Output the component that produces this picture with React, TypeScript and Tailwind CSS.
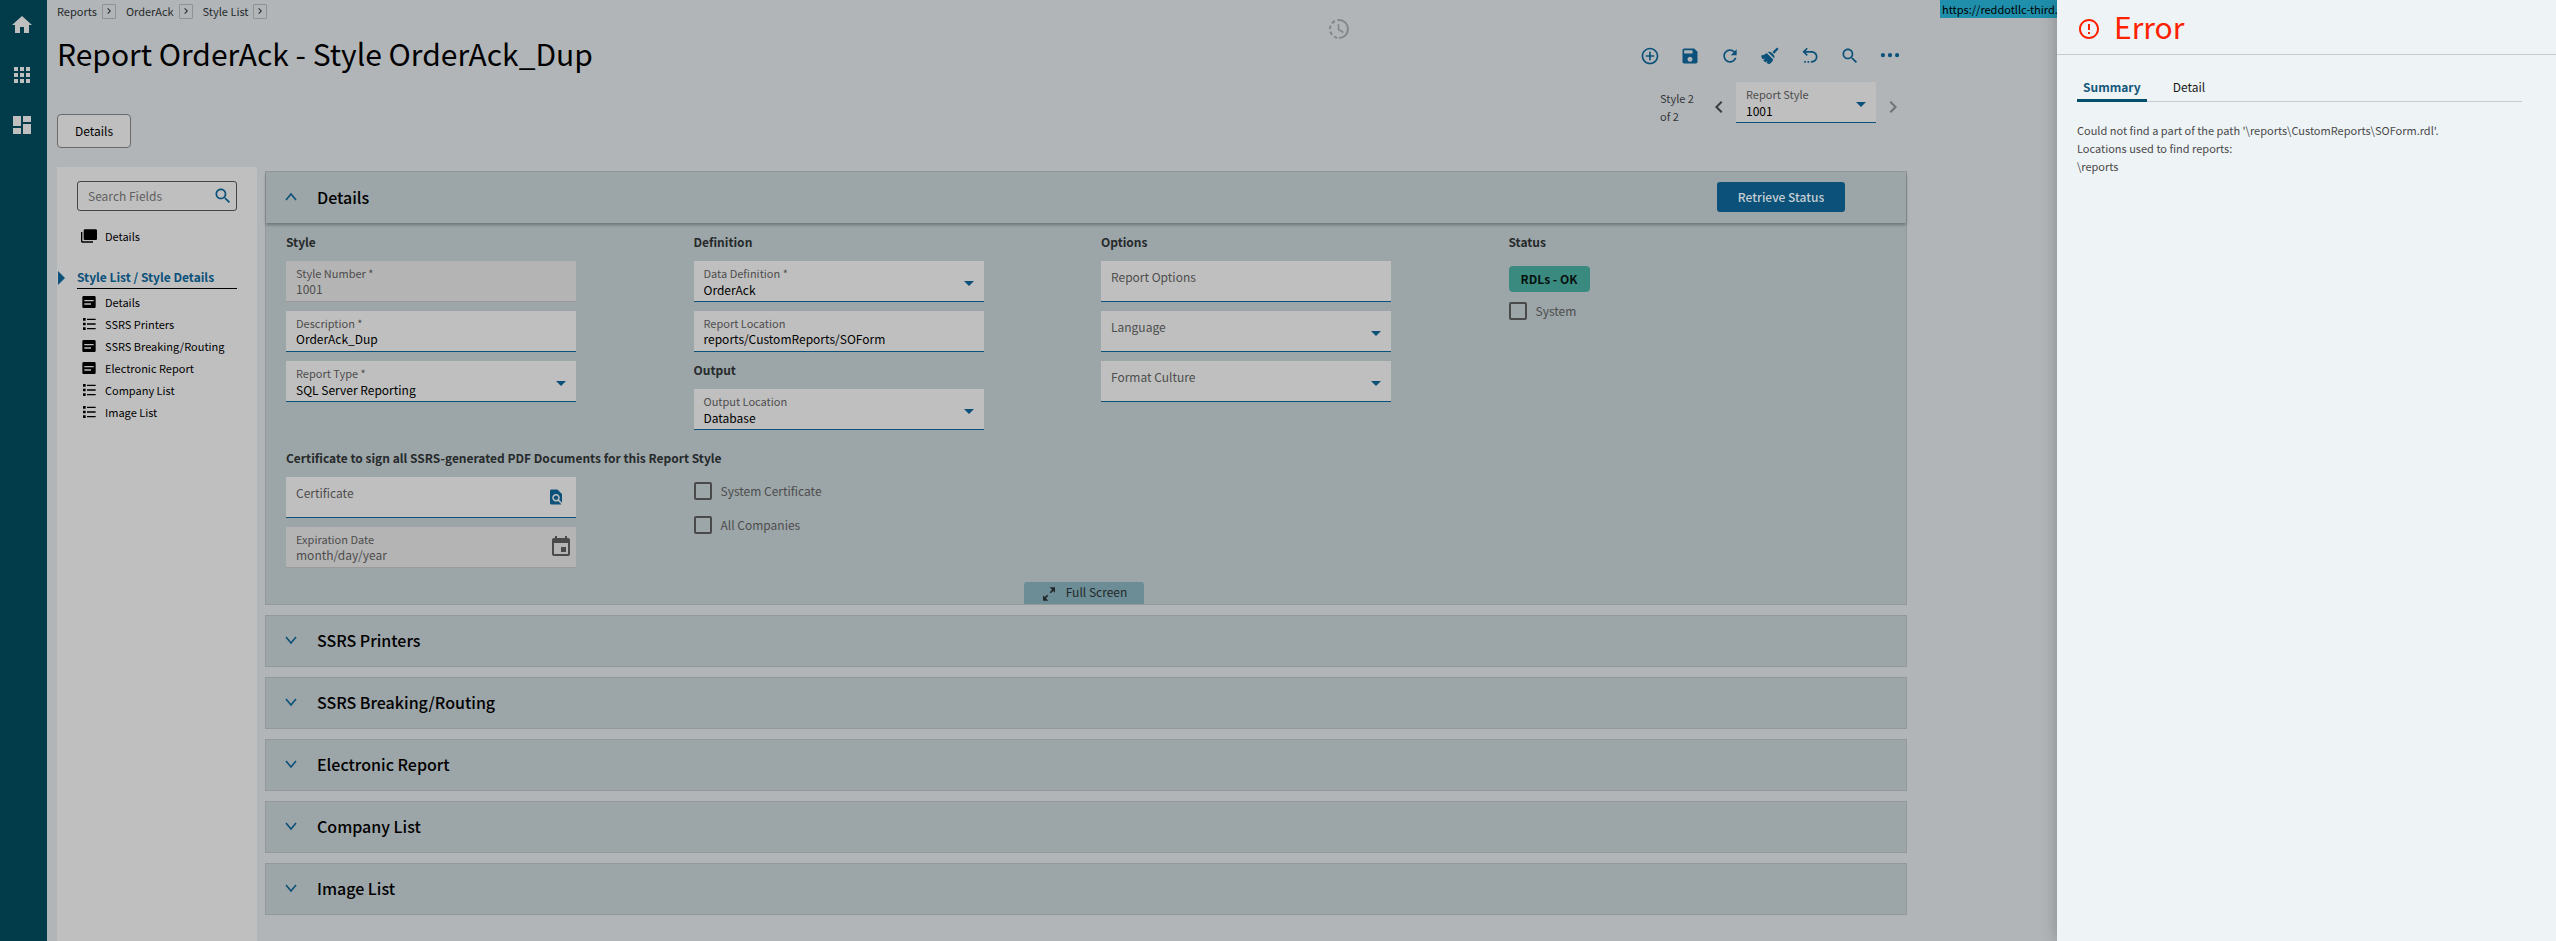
import React from 'react';

interface FieldProps {
  id: string;
  label: string;
  value?: string;
  disabled?: boolean;
}

interface SelectFieldProps extends FieldProps {
  compact?: boolean;
}

const menuItems = [
  { title: 'Details', kind: 'card' },
  { title: 'SSRS Printers', kind: 'list' },
  { title: 'SSRS Breaking/Routing', kind: 'card' },
  { title: 'Electronic Report', kind: 'card' },
  { title: 'Company List', kind: 'list' },
  { title: 'Image List', kind: 'list' },
];

const collapsedCards = ['SSRS Printers', 'SSRS Breaking/Routing', 'Electronic Report', 'Company List', 'Image List'];

const breadcrumbs = ['Reports', 'OrderAck', 'Style List'];

// Material icon paths
const paths = {
  home: 'M10 20v-6h4v6h5v-8h3L12 3 2 12h3v8z',
  apps: 'M4 8h4V4H4v4zm6 12h4v-4h-4v4zm-6 0h4v-4H4v4zm0-6h4v-4H4v4zm6 0h4v-4h-4v4zm6-10v4h4V4h-4zm-6 4h4V4h-4v4zm6 6h4v-4h-4v4zm0 6h4v-4h-4v4z',
  dashboard: 'M3 13h8V3H3v10zm0 8h8v-6H3v6zm10 0h8V11h-8v10zm0-18v6h8V3h-8z',
  add: 'M13 7h-2v4H7v2h4v4h2v-4h4v-2h-4V7zm-1-5C6.48 2 2 6.48 2 12s4.48 10 10 10 10-4.48 10-10S17.52 2 12 2zm0 18c-4.41 0-8-3.59-8-8s3.59-8 8-8 8 3.59 8 8-3.59 8-8 8z',
  save: 'M17 3H5c-1.11 0-2 .9-2 2v14c0 1.1.89 2 2 2h14c1.1 0 2-.9 2-2V7l-4-4zm-5 16c-1.66 0-3-1.34-3-3s1.34-3 3-3 3 1.34 3 3-1.34 3-3 3zm3-10H5V5h10v4z',
  refresh: 'M17.65 6.35C16.2 4.9 14.21 4 12 4c-4.42 0-7.99 3.58-7.99 8s3.57 8 7.99 8c3.73 0 6.84-2.55 7.73-6h-2.08c-.82 2.33-3.04 4-5.65 4-3.31 0-6-2.69-6-6s2.69-6 6-6c1.66 0 3.14.69 4.22 1.78L13 11h7V4l-2.35 2.35z',
  broom: 'M20.600 1.800l1.700 1.700-5.300 5.700-2.100-2.100zM13.900 8l2.300 2.300c1.200 1.500 1.400 2.900.9 4.500L9.400 7.100C11 6.500 12.600 6.900 13.900 8zM8 8.300l7.900 7.900c-1 2.400-2.600 4.300-4.800 5.700l-3.300-1.500 1.300-2-2.800 1.100-2.400-2.100 2.300-2.300-3.500.9L1.300 11.500C3.800 11.200 6.100 10.200 8 8.300z',
  undo: 'M8 2l1.400 1.400L6.800 6H14c3.900 0 7 3.100 7 7s-3.100 7-7 7h-1v-2h1c2.800 0 5-2.200 5-5s-2.200-5-5-5H6.800l2.600 2.600L8 12 3 7zM5 18h2v2H5zM9 18h2v2H9z',
  search: 'M15.5 14h-.79l-.28-.27C15.41 12.59 16 11.11 16 9.5 16 5.91 13.09 3 9.5 3S3 5.91 3 9.5 5.91 16 9.5 16c1.61 0 3.09-.59 4.23-1.57l.27.28v.79l5 4.99L20.49 19l-4.99-5zm-6 0C7.01 14 5 11.99 5 9.5S7.01 5 9.5 5 14 7.01 14 9.5 11.99 14 9.500 14z',
  more: 'M3.500 8.500a2.500 2.500 0 1 0 0 5 2.500 2.500 0 0 0 0-5zM12 8.500a2.500 2.500 0 1 0 0 5 2.500 2.500 0 0 0 0-5zM20.500 8.500a2.500 2.500 0 1 0 0 5 2.500 2.500 0 0 0 0-5z',
  left: 'M15.41 7.41L14 6l-6 6 6 6 1.41-1.41L10.83 12z',
  right: 'M10 6L8.59 7.41 13.17 12l-4.58 4.59L10 18l6-6z',
  findInPage: 'M20 19.59V8l-6-6H6c-1.1 0-1.99.9-1.99 2L4 20c0 1.1.89 2 1.99 2H18c.45 0 .85-.15 1.19-.4l-4.43-4.43c-.8.52-1.74.83-2.76.83-2.76 0-5-2.24-5-5s2.24-5 5-5 5 2.24 5 5c0 1.02-.31 1.96-.83 2.75L20 19.59zM9 13c0 1.66 1.34 3 3 3s3-1.34 3-3-1.34-3-3-3-3 1.34-3 3z',
  event: 'M17 12h-5v5h5v-5zM16 1v2H8V1H6v2H5c-1.11 0-1.99.9-1.99 2L3 19c0 1.1.89 2 2 2h14c1.1 0 2-.9 2-2V5c0-1.1-.9-2-2-2h-1V1h-2zm3 18H5V8h14v11z',
  error: 'M11 15h2v2h-2v-2zm0-8h2v6h-2V7zm.99-5C6.47 2 2 6.48 2 12s4.47 10 9.99 10C17.52 22 22 17.52 22 12S17.52 2 11.99 2zM12 20c-4.42 0-8-3.58-8-8s3.58-8 8-8 8 3.58 8 8-3.58 8-8 8z',
  collections: 'M2 6H0v14c0 1.100.9 2 2 2h16v-2H2V6zM22 2H6c-1.100 0-2 .9-2 2v12c0 1.100.9 2 2 2h16c1.100 0 2-.9 2-2V4c0-1.100-.9-2-2-2z',
  card: 'M20 3H4c-1.100 0-2 .9-2 2v14c0 1.100.9 2 2 2h16c1.100 0 2-.9 2-2V5c0-1.100-.9-2-2-2zM5 9h14v2H5zM5 14h10v2H5z',
  list: 'M3 3h4v4H3zM3 10h4v4H3zM3 17h4v4H3zM9 4h13v2H9zM9 11h13v2H9zM9 18h13v2H9z',
  fullscreen: 'M13 2h8v8l-2.600-2.600-3.600 3.600-1.800-1.800 3.600-3.600zM3 14l2.600 2.600 3.600-3.600 1.800 1.800-3.600 3.600L11 22H3z',
};

const toolbar: { name: keyof typeof paths; label: string }[] = [
  { name: 'add', label: 'New' },
  { name: 'save', label: 'Save' },
  { name: 'refresh', label: 'Refresh' },
  { name: 'broom', label: 'Clear' },
  { name: 'undo', label: 'Undo' },
  { name: 'search', label: 'Search' },
  { name: 'more', label: 'Overflow' },
];

const Icon: React.FC<{ name: keyof typeof paths; className?: string }> = ({ name, className = 'size-6' }) => (
  <svg viewBox="0 0 24 24" fill="currentColor" fillRule="evenodd" className={`shrink-0 ${className}`} aria-hidden="true">
    <path d={paths[name]} />
  </svg>
);

const Chevron: React.FC<{ up?: boolean }> = ({ up }) => (
  <svg viewBox="0 0 12 12" className="size-3 shrink-0 text-[#0b5179]" fill="none" stroke="currentColor" strokeWidth="1.6" aria-hidden="true">
    <path d={up ? 'M1 9l5-6 5 6' : 'M1 3l5 6 5-6'} />
  </svg>
);

const ClockIcon: React.FC = () => (
  <svg viewBox="0 0 24 24" className="size-6 shrink-0 text-[#83878a]" fill="none" stroke="currentColor" strokeWidth="2" aria-hidden="true">
    <path d="M12 3a9 9 0 0 1 0 18" />
    <path d="M12 21a9 9 0 0 1 0-18" strokeDasharray="3.600 2.600" strokeDashoffset="-1.600" />
    <path d="M11.500 7v5.500l5 3" strokeWidth="1.500" />
  </svg>
);

const SectionTitle: React.FC<{ children: React.ReactNode }> = ({ children }) => (
  <h3 className="text-[12px] leading-5 font-bold text-[#262a2b]">{children}</h3>
);

const TextField: React.FC<FieldProps & { children?: React.ReactNode }> = ({ id, label, value, disabled, children }) => (
  <div
    className={`relative flex h-[41px] w-full max-w-[290px] items-center border-b px-2.5 ${
      disabled ? 'border-[#9a9a9a] bg-[#b4b4b4]' : 'border-[#0b5179] bg-[#bfbfbf]'
    }`}
  >
    <div className="min-w-0 flex-1 self-start pt-1">
      <label
        htmlFor={id}
        className={`block text-[#4d4d4d] ${value ? 'text-[11px] leading-4' : 'pt-0.5 text-[12px] leading-5'}`}
      >
        {label}
      </label>
      <input
        id={id}
        defaultValue={value}
        disabled={disabled}
        className={`block w-full bg-transparent text-[12px] leading-4 outline-none ${value ? 'h-4' : 'h-2.5'} ${
          disabled ? 'text-[#4d4d4d]' : 'text-black'
        }`}
      />
    </div>
    {children}
  </div>
);

const SelectField: React.FC<SelectFieldProps> = ({ id, label, value, compact }) => (
  <div className={`relative h-[41px] border-b border-[#0b5179] bg-[#bfbfbf] px-2.5 pt-1 ${compact ? 'w-[140px]' : 'w-full max-w-[290px]'}`}>
    <label
      htmlFor={id}
      className={`block text-[#4d4d4d] ${value ? 'text-[11px] leading-4' : 'pt-0.5 text-[12px] leading-5'}`}
    >
      {label}
    </label>
    <select
      id={id}
      defaultValue={value}
      className={`block w-full appearance-none bg-transparent text-[12px] text-black outline-none ${value ? 'h-[18px] leading-[18px]' : 'h-2.5'}`}
    >
      <option>{value}</option>
    </select>
    <span className="pointer-events-none absolute top-5 right-2.5 border-x-5 border-t-5 border-x-transparent border-t-[#0b5179]" />
  </div>
);

const Checkbox: React.FC<{ id: string; label: string }> = ({ id, label }) => (
  <div className="flex items-center gap-[9px]">
    <input id={id} type="checkbox" className="size-[18px] appearance-none rounded-xs border-2 border-[#4a4a4a]" />
    <label htmlFor={id} className="text-[12px] leading-5 text-[#4d4d4d]">
      {label}
    </label>
  </div>
);

const SideNav: React.FC = () => (
  <nav className="flex w-[47px] shrink-0 flex-col items-center gap-[26px] bg-[#023b49] pt-[13px] pr-[3px] text-[#bfbfbf]">
    <a href="#home" aria-label="Home"><Icon name="home" /></a>
    <a href="#menu" aria-label="Menu"><Icon name="apps" /></a>
    <a href="#dashboard" aria-label="Dashboard"><Icon name="dashboard" /></a>
  </nav>
);

const PageHeader: React.FC = () => (
  <header className="flex h-[167px] items-start pr-[150px]">
    <div className="flex-1">
      <div className="flex h-[22px] items-center gap-2.5">
        {breadcrumbs.map((name) => (
          <div key={name} className="flex items-center gap-[5px]">
            <a href="#crumb" className="text-[11px] leading-4 text-[#262a2b]">{name}</a>
            <button
              aria-label={`Open ${name}`}
              className="flex h-[15px] w-3.5 items-center justify-center rounded-[1px] border border-[#8f9294] text-[#262a2b]"
            >
              <Icon name="right" className="size-3" />
            </button>
          </div>
        ))}
      </div>
      <h1 className="mt-[11px] text-[30px] leading-10 text-black">Report OrderAck - Style OrderAck_Dup</h1>
      <button className="mt-[41px] h-[34px] w-[74px] rounded border border-[#6a6a6a] bg-[#bfbfbf] text-[12px] text-black">Details</button>
    </div>
    <div className="mt-[17px] mr-[289px]">
      <ClockIcon />
    </div>
    <div className="mt-[46px] flex flex-col items-end">
      <div className="flex gap-5 pr-[7px] text-[#0b5179]">
        {toolbar.map((item) => (
          <button key={item.name} aria-label={item.label}>
            <Icon name={item.name} className="size-5" />
          </button>
        ))}
      </div>
      <div className="mt-4 flex items-start gap-[5px] pr-0.5">
        <p className="mt-[7px] w-[42px] text-[11px] leading-[18px] text-[#33373a]">Style 2 of 2</p>
        <button aria-label="Previous" className="mt-[13px] text-[#3a3d3f]">
          <Icon name="left" />
        </button>
        <SelectField id="report-style" label="Report Style" value="1001" compact />
        <button aria-label="Next" className="mt-[13px] text-[#6f7375]">
          <Icon name="right" />
        </button>
      </div>
    </div>
  </header>
);

const FieldTree: React.FC = () => (
  <aside className="w-[200px] shrink-0 bg-[#bfbfbf] px-5 pt-3.5">
    <div className="flex h-[30px] items-center rounded-[3px] border border-[#444] pr-[3px] pl-2.5">
      <input
        aria-label="Search Fields"
        placeholder="Search Fields"
        className="min-w-0 flex-1 bg-transparent text-[12px] leading-5 outline-none placeholder:text-[#606060]"
      />
      <Icon name="search" className="size-5 text-[#0b5179]" />
    </div>
    <a href="#details" className="mt-3.5 ml-1 flex h-[22px] items-center gap-2 text-[11px] text-black">
      <Icon name="collections" className="size-4" />
      Details
    </a>
    <div className="relative mt-5 border-b border-black pb-px">
      <span className="absolute top-1 -left-[19px] border-y-7 border-l-7 border-y-transparent border-l-[#0b5179]" />
      <h2 className="text-[12px] leading-5 font-bold whitespace-nowrap text-[#0b5179]">Style List / Style Details</h2>
    </div>
    <ul className="mt-0.5 ml-1">
      {menuItems.map((item) => (
        <li key={item.title}>
          <a href="#section" className="flex h-[22px] items-center gap-2 text-[11px] whitespace-nowrap text-black">
            <Icon name={item.kind === 'card' ? 'card' : 'list'} className="size-4" />
            {item.title}
          </a>
        </li>
      ))}
    </ul>
  </aside>
);

const DetailsCard: React.FC = () => (
  <section className="border border-[#949899] bg-[#9ca5a8]">
    <header className="flex h-[51px] items-center pr-[61px] pb-0.5 pl-[19px] shadow-[0_2px_3px_rgba(0,0,0,0.3)]">
      <Chevron up />
      <h2 className="ml-5 flex-1 text-base font-medium text-black">Details</h2>
      <button className="h-[30px] w-32 rounded-[3px] bg-[#0b5179] text-[12px] font-medium text-[#c4cdd2]">Retrieve Status</button>
    </header>
    <div className="grid grid-cols-4 gap-x-[30px] px-5 pt-[9px]">
      <div className="flex flex-col gap-[9px]">
        <SectionTitle>Style</SectionTitle>
        <TextField id="style-number" label="Style Number *" value="1001" disabled />
        <TextField id="description" label="Description *" value="OrderAck_Dup" />
        <SelectField id="report-type" label="Report Type *" value="SQL Server Reporting" />
      </div>
      <div className="flex flex-col gap-[9px]">
        <SectionTitle>Definition</SectionTitle>
        <SelectField id="data-definition" label="Data Definition *" value="OrderAck" />
        <div className="flex flex-col gap-2">
          <TextField id="report-location" label="Report Location" value="reports/CustomReports/SOForm" />
          <SectionTitle>Output</SectionTitle>
        </div>
        <SelectField id="output-location" label="Output Location" value="Database" />
      </div>
      <div className="flex flex-col gap-[9px]">
        <SectionTitle>Options</SectionTitle>
        <TextField id="report-options" label="Report Options" />
        <SelectField id="language" label="Language" />
        <SelectField id="format-culture" label="Format Culture" />
      </div>
      <div className="flex flex-col items-start gap-[9px]">
        <SectionTitle>Status</SectionTitle>
        <span className="mt-[5px] rounded-sm bg-[#3a8a7f] px-3 text-[12px] leading-[26px] font-bold text-[#071210]">RDLs - OK</span>
        <Checkbox id="system" label="System" />
      </div>
    </div>
    <div className="mt-[18px] px-5">
      <SectionTitle>Certificate to sign all SSRS-generated PDF Documents for this Report Style</SectionTitle>
      <div className="mt-[9px] grid grid-cols-4 gap-x-[30px]">
        <div className="flex flex-col gap-[9px]">
          <TextField id="certificate" label="Certificate">
            <Icon name="findInPage" className="mr-px size-[18px] text-[#0b5179]" />
          </TextField>
          <TextField id="expiration-date" label="Expiration Date" value="month/day/year" disabled>
            <Icon name="event" className="-mr-[7px] size-6 text-[#4a4a4a]" />
          </TextField>
        </div>
        <div className="flex flex-col gap-3.5 pt-1">
          <Checkbox id="system-certificate" label="System Certificate" />
          <Checkbox id="all-companies" label="All Companies" />
        </div>
      </div>
    </div>
    <div className="mt-3.5 flex justify-center pr-1">
      <button className="flex h-[22px] w-[120px] items-center justify-center gap-[9px] rounded-t-[3px] bg-[#6c8d95] pb-0.5 text-[12px] text-[#23292b]">
        <Icon name="fullscreen" className="mt-1 size-4" />
        Full Screen
      </button>
    </div>
  </section>
);

const CollapsedCard: React.FC<{ title: string }> = ({ title }) => (
  <section className="border border-[#949899] bg-[#9ca5a8]">
    <button
      aria-expanded="false"
      className="flex h-[50px] w-full items-center gap-5 pb-0.5 pl-[19px] text-left text-base font-medium text-black"
    >
      <Chevron />
      {title}
    </button>
  </section>
);

const ErrorPanel: React.FC = () => (
  <aside className="z-10 w-[499px] shrink-0 bg-[#eef3f6] shadow-[0_0_16px_rgba(0,0,0,0.25)]">
    <header className="flex h-[55px] items-center gap-[13px] border-b border-[#c8cccf] pb-0.5 pl-5 text-[#ff2000]">
      <Icon name="error" className="mt-1.5 size-6" />
      <h2 className="text-[30px] leading-9">Error</h2>
    </header>
    <div className="pt-5 pr-[34px] pl-5">
      <div className="flex h-[27px] border-b border-[#c8cccf] text-[12px]">
        <button className="h-[27px] border-b-3 border-[#02506b] px-1.5 font-bold text-[#14587a]">Summary</button>
        <button className="ml-5 h-[27px] border-b-3 border-transparent px-1.5 text-[#1a1a1a]">Detail</button>
      </div>
      <div className="mt-[19px] text-[11px] leading-[18px] text-[#4a4a4a]">
        <p>Could not find a part of the path '\reports\CustomReports\SOForm.rdl'.</p>
        <p>Locations used to find reports:</p>
        <p>\reports</p>
      </div>
    </div>
  </aside>
);

const App: React.FC = () => {
  return (
    <div className="flex min-h-screen bg-[#b1b5b8] font-['Noto_Sans_CJK_SC','Noto_Sans',sans-serif]">
      <SideNav />
      <div className="relative flex min-w-0 flex-1 flex-col pl-2.5">
        <div className="absolute top-0 right-0 h-[18px] w-[117px] bg-[#1f8fab] pl-0.5 text-[11px] leading-[18px] whitespace-nowrap text-black">
          https://reddotllc-third.
        </div>
        <PageHeader />
        <div className="flex flex-1 gap-2">
          <FieldTree />
          <main className="flex min-w-0 flex-1 flex-col gap-2.5 pt-1 pr-[150px]">
            <DetailsCard />
            {collapsedCards.map((title) => (
              <CollapsedCard key={title} title={title} />
            ))}
          </main>
        </div>
      </div>
      <ErrorPanel />
    </div>
  );
};

export default App;
